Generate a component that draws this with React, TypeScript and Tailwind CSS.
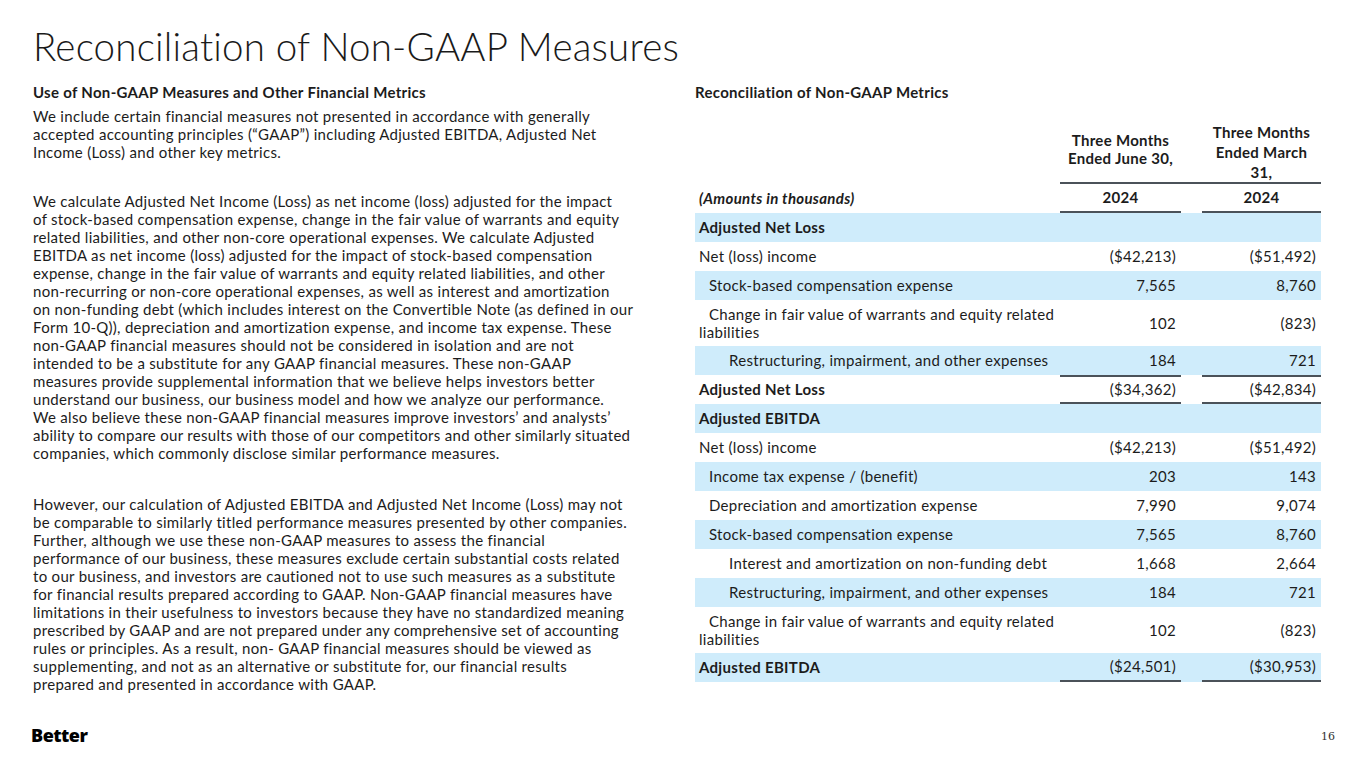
import React from "react"

const font = { fontFamily: "Lato, 'Noto Sans', sans-serif" }

const para1 = [
  "We include certain financial measures not presented in accordance with generally",
  "accepted accounting principles (“GAAP”) including Adjusted EBITDA, Adjusted Net",
  "Income (Loss) and other key metrics.",
]

const para2 = [
  "We calculate Adjusted Net Income (Loss) as net income (loss) adjusted for the impact",
  "of stock-based compensation expense, change in the fair value of warrants and equity",
  "related liabilities, and other non-core operational expenses. We calculate Adjusted",
  "EBITDA as net income (loss) adjusted for the impact of stock-based compensation",
  "expense, change in the fair value of warrants and equity related liabilities, and other",
  "non-recurring or non-core operational expenses, as well as interest and amortization",
  "on non-funding debt (which includes interest on the Convertible Note (as defined in our",
  "Form 10-Q)), depreciation and amortization expense, and income tax expense. These",
  "non-GAAP financial measures should not be considered in isolation and are not",
  "intended to be a substitute for any GAAP financial measures. These non-GAAP",
  "measures provide supplemental information that we believe helps investors better",
  "understand our business, our business model and how we analyze our performance.",
  "We also believe these non-GAAP financial measures improve investors’ and analysts’",
  "ability to compare our results with those of our competitors and other similarly situated",
  "companies, which commonly disclose similar performance measures.",
]

const para3 = [
  "However, our calculation of Adjusted EBITDA and Adjusted Net Income (Loss) may not",
  "be comparable to similarly titled performance measures presented by other companies.",
  "Further, although we use these non-GAAP measures to assess the financial",
  "performance of our business, these measures exclude certain substantial costs related",
  "to our business, and investors are cautioned not to use such measures as a substitute",
  "for financial results prepared according to GAAP. Non-GAAP financial measures have",
  "limitations in their usefulness to investors because they have no standardized meaning",
  "prescribed by GAAP and are not prepared under any comprehensive set of accounting",
  "rules or principles. As a result, non- GAAP financial measures should be viewed as",
  "supplementing, and not as an alternative or substitute for, our financial results",
  "prepared and presented in accordance with GAAP.",
]

type Row = {
  label: string
  a?: string
  b?: string
  blue?: boolean
  bold?: boolean
  indent?: 0 | 1 | 2
  wrap?: boolean
  total?: boolean
}

const rows: Row[] = [
  { label: "Adjusted Net Loss", blue: true, bold: true },
  { label: "Net (loss) income", a: "($42,213)", b: "($51,492)" },
  { label: "Stock-based compensation expense", a: "7,565", b: "8,760", blue: true, indent: 1 },
  { label: "Change in fair value of warrants and equity related liabilities", a: "102", b: "(823)", wrap: true },
  { label: "Restructuring, impairment, and other expenses", a: "184", b: "721", blue: true, indent: 2 },
  { label: "Adjusted Net Loss", a: "($34,362)", b: "($42,834)", bold: true, total: true },
  { label: "Adjusted EBITDA", blue: true, bold: true },
  { label: "Net (loss) income", a: "($42,213)", b: "($51,492)" },
  { label: "Income tax expense / (benefit)", a: "203", b: "143", blue: true, indent: 1 },
  { label: "Depreciation and amortization expense", a: "7,990", b: "9,074", indent: 1 },
  { label: "Stock-based compensation expense", a: "7,565", b: "8,760", blue: true, indent: 1 },
  { label: "Interest and amortization on non-funding debt", a: "1,668", b: "2,664", indent: 2 },
  { label: "Restructuring, impairment, and other expenses", a: "184", b: "721", blue: true, indent: 2 },
  { label: "Change in fair value of warrants and equity related liabilities", a: "102", b: "(823)", wrap: true },
  { label: "Adjusted EBITDA", a: "($24,501)", b: "($30,953)", bold: true, blue: true, total: true },
]

function Lines({ lines }: { lines: string[] }) {
  return (
    <div className="text-[15px] leading-[18px] tracking-[0.3px] text-[#1c1c1c]">
      {lines.map((l, i) => (
        <div key={i} className="whitespace-nowrap">{l}</div>
      ))}
    </div>
  )
}

function TableRow({ r, last }: { r: Row; last?: boolean }) {
  const indent = r.indent === 2 ? "pl-[34px]" : r.indent === 1 ? "pl-[14px]" : "pl-[4px]"
  const lineTop = r.total && !last ? "border-t-2 border-[#4b5259]" : ""
  const lineBot = r.total ? "border-b-2 border-[#4b5259]" : ""
  return (
    <div className={`flex ${r.wrap ? "h-[46px]" : "h-[29px]"} ${r.blue ? "bg-[#cfecfb]" : ""}`}>
      <div className={`w-[365px] flex items-center ${r.bold ? "font-bold" : ""} ${r.wrap ? "pl-[4px]" : indent}`}>
        {r.wrap ? (
          <div className="leading-[18px] indent-[10px]">{r.label}</div>
        ) : (
          <span>{r.label}</span>
        )}
      </div>
      <div className={`w-[121px] flex items-center justify-end pr-[5px] ${lineTop} ${lineBot}`}>{r.a}</div>
      <div className="w-[21px]" />
      <div className={`w-[119px] flex items-center justify-end pr-[5px] ${lineTop} ${lineBot}`}>{r.b}</div>
    </div>
  )
}

export default function App() {
  return (
    <div className="w-[1365px] h-[768px] bg-white relative overflow-hidden text-[#1c1c1c]" style={font}>
      <h1 className="pl-[33px] pt-[24px] text-[38.5px] leading-[44px] font-light tracking-[0.2px] text-[#1a1a1a]">
        Reconciliation of Non-GAAP Measures
      </h1>
      <div className="flex mt-[15px]">
        <div className="w-[695px] pl-[33px]">
          <div className="text-[15px] leading-[18px] tracking-[0.3px] font-bold mb-[6px]">
            Use of Non-GAAP Measures and Other Financial Metrics
          </div>
          <Lines lines={para1} />
          <div className="mt-[31px]">
            <Lines lines={para2} />
          </div>
          <div className="mt-[33px]">
            <Lines lines={para3} />
          </div>
        </div>
        <div className="w-[626px] text-[15px] tracking-[0.3px]">
          <div className="leading-[18px] font-bold">Reconciliation of Non-GAAP Metrics</div>
          <div className="flex h-[63px] mt-[20px] leading-[20px] font-bold">
            <div className="w-[365px]" />
            <div className="w-[261px] flex border-b-2 border-[#4b5259]">
              <div className="w-[121px] flex items-center justify-center text-center pb-[6px] leading-[18px]">
                <div>Three Months<br />Ended June 30,</div>
              </div>
              <div className="w-[21px]" />
              <div className="w-[119px] flex items-center justify-center text-center">
                <div>Three Months<br />Ended March<br />31,</div>
              </div>
            </div>
          </div>
          <div className="flex h-[29px] font-bold">
            <div className="w-[365px] flex items-center pl-[4px] italic">(Amounts in thousands)</div>
            <div className="w-[121px] flex items-center justify-center border-b-2 border-[#4b5259]">2024</div>
            <div className="w-[21px]" />
            <div className="w-[119px] flex items-center justify-center border-b-2 border-[#4b5259]">2024</div>
          </div>
          {rows.map((r, i) => (
            <TableRow key={i} r={r} last={i === rows.length - 1} />
          ))}
        </div>
      </div>
      <div className="absolute left-[31px] top-[722px] text-[18px] font-extrabold tracking-[-0.5px] text-black" style={{ fontFamily: "'Open Sans', sans-serif" }}>
        Better
      </div>
      <div className="absolute left-[1321px] top-[729px] text-[11px] text-[#333]" style={{ fontFamily: "'DejaVu Serif', serif" }}>
        16
      </div>
    </div>
  )
}
